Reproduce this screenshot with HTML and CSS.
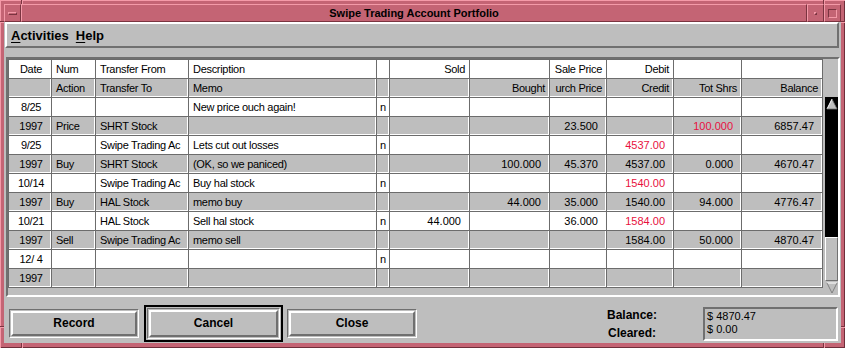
FILE: index.html
```html
<!DOCTYPE html>
<html lang="en">
<head>
	<meta charset="UTF-8">
	<title>Swipe Trading Account Portfolio</title>
	<link rel="stylesheet" href="styles.css">
</head>
<body>
	<div class="window">
		<!-- resize handle notches in the frame -->
		<span class="notch v top_l"></span><span class="notch v top_r"></span>
		<span class="notch v bot_l"></span><span class="notch v bot_r"></span>
		<span class="notch h left_t"></span><span class="notch h left_b"></span>
		<span class="notch h right_t"></span><span class="notch h right_b"></span>

		<div class="titlebar">
			<div class="tb_btn"><span class="menu_bar"></span></div>
			<div class="title">Swipe Trading Account Portfolio</div>
			<div class="tb_btn"><span class="min_dot"></span></div>
			<div class="tb_btn"><span class="max_sq"></span></div>
		</div>
		<div class="client">
			<div class="menubar">
				<span><u>A</u>ctivities</span>
				<span><u>H</u>elp</span>
			</div>

			<div class="ledger">
				<table class="register">
					<colgroup>
						<col style="width:43px"><col style="width:44px"><col style="width:93px"><col style="width:188px">
						<col style="width:13px"><col style="width:80px"><col style="width:80px"><col style="width:57px">
						<col style="width:67px"><col style="width:68px"><col style="width:81px">
					</colgroup>
					<tr class="head">
						<td class="c">Date</td><td>Num</td><td>Transfer From</td><td>Description</td><td></td>
						<td class="r">Sold</td><td></td><td class="r">Sale Price</td><td class="r">Debit</td><td></td><td></td>
					</tr>
					<tr class="head alt">
						<td></td><td>Action</td><td>Transfer To</td><td>Memo</td><td></td>
						<td></td><td class="r">Bought</td><td class="r">urch Price</td><td class="r">Credit</td><td class="r">Tot Shrs</td><td class="r">Balance</td>
					</tr>
					<tr>
						<td class="c">8/25</td><td></td><td></td><td>New price ouch again!</td><td class="n">n</td>
						<td></td><td></td><td></td><td></td><td></td><td></td>
					</tr>
					<tr class="alt">
						<td class="c">1997</td><td>Price</td><td>SHRT Stock</td><td></td><td></td>
						<td></td><td></td><td class="num">23.500</td><td></td><td class="num red">100.000</td><td class="num">6857.47</td>
					</tr>
					<tr>
						<td class="c">9/25</td><td></td><td>Swipe Trading Ac</td><td>Lets cut out losses</td><td class="n">n</td>
						<td></td><td></td><td></td><td class="num red">4537.00</td><td></td><td></td>
					</tr>
					<tr class="alt">
						<td class="c">1997</td><td>Buy</td><td>SHRT Stock</td><td>(OK, so we paniced)</td><td></td>
						<td></td><td class="num">100.000</td><td class="num">45.370</td><td class="num">4537.00</td><td class="num">0.000</td><td class="num">4670.47</td>
					</tr>
					<tr>
						<td class="c">10/14</td><td></td><td>Swipe Trading Ac</td><td>Buy hal stock</td><td class="n">n</td>
						<td></td><td></td><td></td><td class="num red">1540.00</td><td></td><td></td>
					</tr>
					<tr class="alt">
						<td class="c">1997</td><td>Buy</td><td>HAL Stock</td><td>memo buy</td><td></td>
						<td></td><td class="num">44.000</td><td class="num">35.000</td><td class="num">1540.00</td><td class="num">94.000</td><td class="num">4776.47</td>
					</tr>
					<tr>
						<td class="c">10/21</td><td></td><td>HAL Stock</td><td>Sell hal stock</td><td class="n">n</td>
						<td class="num">44.000</td><td></td><td class="num">36.000</td><td class="num red">1584.00</td><td></td><td></td>
					</tr>
					<tr class="alt">
						<td class="c">1997</td><td>Sell</td><td>Swipe Trading Ac</td><td>memo sell</td><td></td>
						<td></td><td></td><td></td><td class="num">1584.00</td><td class="num">50.000</td><td class="num">4870.47</td>
					</tr>
					<tr>
						<td class="c">12/ 4</td><td></td><td></td><td></td><td class="n">n</td>
						<td></td><td></td><td></td><td></td><td></td><td></td>
					</tr>
					<tr class="alt">
						<td class="c">1997</td><td></td><td></td><td></td><td></td>
						<td></td><td></td><td></td><td></td><td></td><td></td>
					</tr>
				</table>

				<div class="scrollbar">
					<div class="arrow up">
						<svg width="12" height="12" viewBox="0 0 12 12"><polygon points="6,1 11,11 1,11" fill="#bebebe"/><polyline points="1,11 6,1" stroke="#fff" fill="none"/><polyline points="6,1 11,11 1,11" stroke="#707070" fill="none" stroke-width="0.8"/></svg>
					</div>
					<div class="trough"></div>
					<div class="thumb"></div>
					<div class="arrow down">
						<svg width="12" height="12" viewBox="0 0 12 12"><polygon points="1,1 11,1 6,11" fill="#bebebe"/><polyline points="1,1 11,1" stroke="#fff" fill="none"/><polyline points="11,1 6,11 1,1" stroke="#707070" fill="none" stroke-width="0.8"/></svg>
					</div>
				</div>
			</div>

			<div class="footer">
				<div class="buttons">
					<div class="btn_ring"><div class="btn">Record</div></div>
					<div class="default"><div class="btn_ring"><div class="btn">Cancel</div></div></div>
					<div class="btn_ring"><div class="btn">Close</div></div>
				</div>
				<div class="totals">
					<div class="labels">
						<div>Balance:</div>
						<div>Cleared:</div>
					</div>
					<div class="values">
						<div>$ 4870.47</div>
						<div>$ 0.00</div>
					</div>
				</div>
			</div>
		</div>
	</div>
</body>
</html>
```

FILE: styles.css
```css
*{margin:0; padding:0;}
body{
	background:#c46474;
	font-family:"Liberation Sans", Arial, sans-serif;
	color:#000;
}
.window{
	position:relative;
	display:flex;
	flex-direction:column;
	width:845px;
	height:348px;
	box-sizing:border-box;
	padding:4px 4px 5px 4px;
	background:#c46474;
	box-shadow:inset 1px 1px 0 #f49aa8, inset -1px -1px 0 #6e2e3a;
}
.notch{position:absolute; background:#7a3440;}
.notch.v{width:1px; height:4px; box-shadow:1px 0 0 #f49aa8;}
.notch.h{width:4px; height:1px; box-shadow:0 1px 0 #f49aa8;}
.top_l{left:21px; top:0;}
.top_r{left:823px; top:0;}
.bot_l{left:21px; bottom:0; height:5px !important;}
.bot_r{left:823px; bottom:0; height:5px !important;}
.left_t{left:0; top:21px;}
.left_b{left:0; top:326px;}
.right_t{right:0; top:21px;}
.right_b{right:0; top:326px;}

/* title bar */
.titlebar{
	display:flex;
	height:18px;
}
.tb_btn, .title{
	box-sizing:border-box;
	border:1px solid;
	border-color:#f49aa8 #7a3440 #7a3440 #f49aa8;
	background:#c46474;
}
.tb_btn{
	display:flex;
	align-items:center;
	justify-content:center;
	width:17px;
}
.title{
	flex:1;
	text-align:center;
	font-size:11px;
	font-weight:bold;
	line-height:16px;
}
.menu_bar{
	width:9px;
	height:3px;
	box-sizing:border-box;
	border:1px solid;
	border-color:#f49aa8 #7a3440 #7a3440 #f49aa8;
}
.min_dot{
	width:3px;
	height:3px;
	box-sizing:border-box;
	border:1px solid;
	border-color:#f49aa8 #7a3440 #7a3440 #f49aa8;
}
.max_sq{
	width:9px;
	height:9px;
	box-sizing:border-box;
	border:1px solid;
	border-color:#7a3440 #f49aa8 #f49aa8 #7a3440;
}

/* client area */
.client{
	display:flex;
	flex-direction:column;
	flex:1;
	background:#bebebe;
}
.menubar{
	display:flex;
	align-items:center;
	gap:7px;
	height:26px;
	box-sizing:border-box;
	margin:0 2px 0 1px;
	padding:0 0 0 4px;
	border:2px solid;
	border-color:#fff #707070 #707070 #fff;
	font-size:13px;
	font-weight:bold;
}
.menubar u{text-decoration-thickness:1px; text-underline-offset:2px;}

.ledger{
	display:flex;
	height:240px;
	box-sizing:border-box;
	margin:9px 1px 0 2px;
	border:2px solid;
	border-color:#707070 #fff #fff #707070;
}
.register{
	border-collapse:collapse;
	table-layout:fixed;
	width:814px;
	align-self:flex-start;
	font-size:11px;
	letter-spacing:-0.3px;
	background:#fff;
}
.register td{
	height:18px;
	padding:0 3px 0 4px;
	border:1px solid #6c6c6c;
	white-space:nowrap;
	overflow:hidden;
	line-height:18px;
}
.register tr.alt td{
	background:#bebebe;
	box-shadow:inset -1px -1px 0 #fff;
}
.register td.c{text-align:center; padding:0 0 0 2px;}
.register td.r{text-align:right; padding-right:4px;}
.register td.n{padding-left:3px;}
.register td.num{
	text-align:right;
	padding-right:8px;
	letter-spacing:0;
}
.register td.red{color:#e8103e;}

.scrollbar{
	display:flex;
	flex-direction:column;
	width:13px;
	margin:38px 0 0 auto;
	background:#000;
}
.arrow{
	display:flex;
	align-items:center;
	justify-content:center;
	height:14px;
}
.arrow.down{background:#bebebe;}
.trough{flex:1;}
.thumb{
	height:44px;
	box-sizing:border-box;
	background:#bebebe;
	border:1px solid;
	border-color:#fff #707070 #707070 #fff;
}

/* footer */
.footer{
	display:flex;
	align-items:center;
	height:37px;
	margin-top:8px;
	padding:0 3px 0 5px;
}
.buttons{
	display:flex;
	align-items:center;
	gap:5px;
}
.btn_ring{
	width:130px;
	height:29px;
	box-sizing:border-box;
	border:1px solid;
	border-color:#707070 #fff #fff #707070;
	padding:1px;
}
.btn{
	height:100%;
	box-sizing:border-box;
	border:2px solid;
	border-color:#fff #707070 #707070 #fff;
	text-align:center;
	font-size:12px;
	font-weight:bold;
	line-height:21px;
}
.default{
	border:2px solid #000;
	padding:1px;
	margin-right:-1px;
}
.default .btn_ring{width:133px; height:31px;}
.default .btn{line-height:23px;}

.totals{
	display:flex;
	align-items:center;
	margin-left:auto;
	gap:36px;
}
.labels{
	width:70px;
	text-align:center;
	font-size:12px;
	font-weight:bold;
	line-height:18px;
}
.values{
	width:135px;
	height:34px;
	box-sizing:border-box;
	border:2px solid;
	border-color:#707070 #fff #fff #707070;
	padding:1px 2px 0 2px;
	font-size:11px;
	line-height:13px;
}
```
